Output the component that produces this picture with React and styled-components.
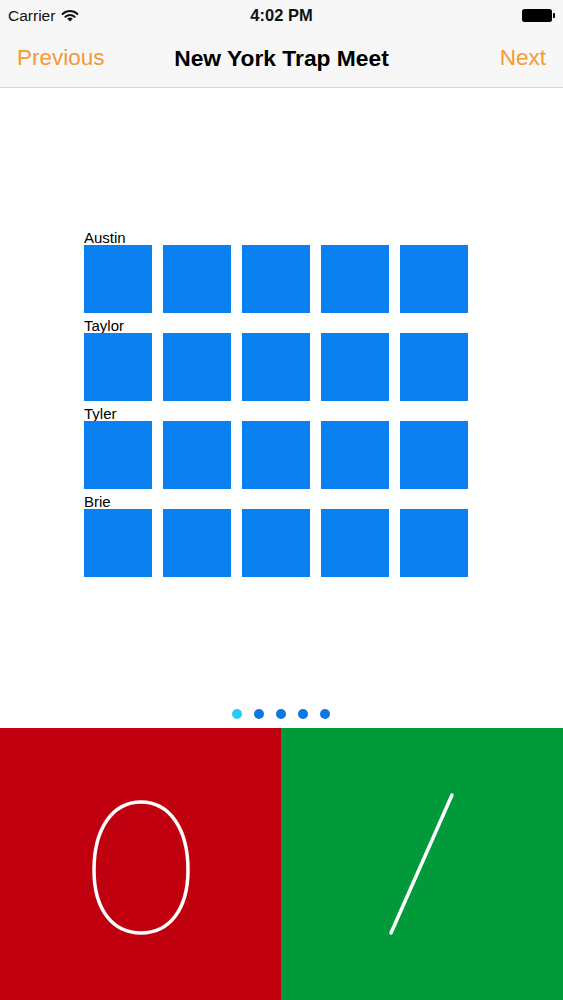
import React from 'react'
import styled, { createGlobalStyle } from 'styled-components'

const people = ['Austin', 'Taylor', 'Tyler', 'Brie']
const squaresPerRow = 5
const pages = 5

const GlobalStyle = createGlobalStyle`
  body {
    margin: 0;
    font-family: "Liberation Sans", Arial, sans-serif;
    background: #ffffff;
  }
`

const WifiIcon = () => (
  <svg width="18" height="13" viewBox="0 0 18 13">
    <path d="M1.6 5 A10.6 10.6 0 0 1 16.4 5" fill="none" stroke="#111" strokeWidth="2" strokeLinecap="round" />
    <path d="M4.4 7.8 A6.6 6.6 0 0 1 13.6 7.8" fill="none" stroke="#111" strokeWidth="2" strokeLinecap="round" />
    <path d="M9 12.6 L6.2 9.8 A4 4 0 0 1 11.8 9.8 Z" fill="#111" />
  </svg>
)

export const App = () => {
  return (
    <>
      <GlobalStyle />
      <Page>
        <StatusBar>
          <Carrier>
            Carrier <WifiIcon />
          </Carrier>
          <Clock>4:02 PM</Clock>
          <BatterySlot>
            <Battery />
          </BatterySlot>
        </StatusBar>
        <NavBar>
          <NavButton>Previous</NavButton>
          <Title>New York Trap Meet</Title>
          <NavButton $right>Next</NavButton>
        </NavBar>

        <Content>
          <Board>
            {people.map((name) => (
              <PersonRow key={name}>
                <Label>{name}</Label>
                <Squares>
                  {Array.from({ length: squaresPerRow }).map((_, i) => (
                    <Square key={i} />
                  ))}
                </Squares>
              </PersonRow>
            ))}
          </Board>
          <Dots>
            {Array.from({ length: pages }).map((_, i) => (
              <Dot key={i} $active={i === 0} />
            ))}
          </Dots>
        </Content>

        <Answers>
          <AnswerPane $color="#c0000f" $shift={8}>
            <svg width="104" height="140" viewBox="0 0 104 140">
              <path
                d="M52 4 C80 4 99 30 99 72 C99 112 80 135 52 135 C24 135 5 112 5 72 C5 30 24 4 52 4 Z"
                fill="none"
                stroke="#fff"
                strokeWidth="3.5"
              />
            </svg>
          </AnswerPane>
          <AnswerPane $color="#009a3a" $shift={0}>
            <svg width="72" height="148" viewBox="0 0 72 148">
              <line x1="66" y1="5" x2="5" y2="143" stroke="#fff" strokeWidth="3.5" strokeLinecap="round" />
            </svg>
          </AnswerPane>
        </Answers>
      </Page>
    </>
  )
}

export default App

const Page = styled.div`
  height: 1000px;
  display: flex;
  flex-direction: column;
  overflow: hidden;
`

const StatusBar = styled.div`
  height: 30px;
  background: #f7f7f8;
  display: grid;
  grid-template-columns: 1fr auto 1fr;
  align-items: center;
  padding: 0 8px;
  color: #111;
`

const Carrier = styled.div`
  display: flex;
  align-items: center;
  gap: 6px;
  font-size: 15.5px;
  padding-top: 1px;
`

const Clock = styled.div`
  font-size: 16.5px;
  font-weight: 700;
  padding-top: 1px;
`

const BatterySlot = styled.div`
  display: flex;
  justify-content: flex-end;
  padding-right: 3px;
`

const Battery = styled.div`
  position: relative;
  width: 30px;
  height: 13px;
  background: #000;
  border-radius: 2.5px;

  &::after {
    content: '';
    position: absolute;
    right: -3px;
    top: 4px;
    width: 2px;
    height: 5px;
    background: #000;
    border-radius: 0 1px 1px 0;
  }
`

const NavBar = styled.div`
  box-sizing: border-box;
  height: 58px;
  background: #f7f7f8;
  border-bottom: 1px solid #d7d7d9;
  display: grid;
  grid-template-columns: 1fr auto 1fr;
  align-items: center;
  padding: 0 17px 1px;
`

const NavButton = styled.div`
  font-size: 22.5px;
  color: #f29a35;
  justify-self: ${(p) => (p.$right ? 'end' : 'start')};
`

const Title = styled.div`
  font-size: 22.8px;
  font-weight: 700;
  color: #000;
`

const Content = styled.div`
  flex: 1;
  display: flex;
  flex-direction: column;
  padding: 142px 0 9px;
  background: #fff;
`

const Board = styled.div`
  display: flex;
  flex-direction: column;
  gap: 5px;
  padding-left: 84px;
`

const PersonRow = styled.div`
  display: flex;
  flex-direction: column;
`

const Label = styled.div`
  font-size: 15px;
  line-height: 15px;
  color: #000;
`

const Squares = styled.div`
  display: flex;
  gap: 11px;
`

const Square = styled.div`
  width: 68px;
  height: 68px;
  background: #0b80f0;
`

const Dots = styled.div`
  margin-top: auto;
  display: flex;
  justify-content: center;
  gap: 12px;
  padding-right: 1px;
`

const Dot = styled.div`
  width: 10px;
  height: 10px;
  border-radius: 50%;
  background: ${(p) => (p.$active ? '#2cc8f2' : '#0b78e2')};
`

const Answers = styled.div`
  height: 272px;
  display: grid;
  grid-template-columns: 281px 1fr;
`

const AnswerPane = styled.div`
  background: ${(p) => p.$color};
  display: flex;
  align-items: center;
  justify-content: center;
  padding-top: ${(p) => p.$shift}px;
`
